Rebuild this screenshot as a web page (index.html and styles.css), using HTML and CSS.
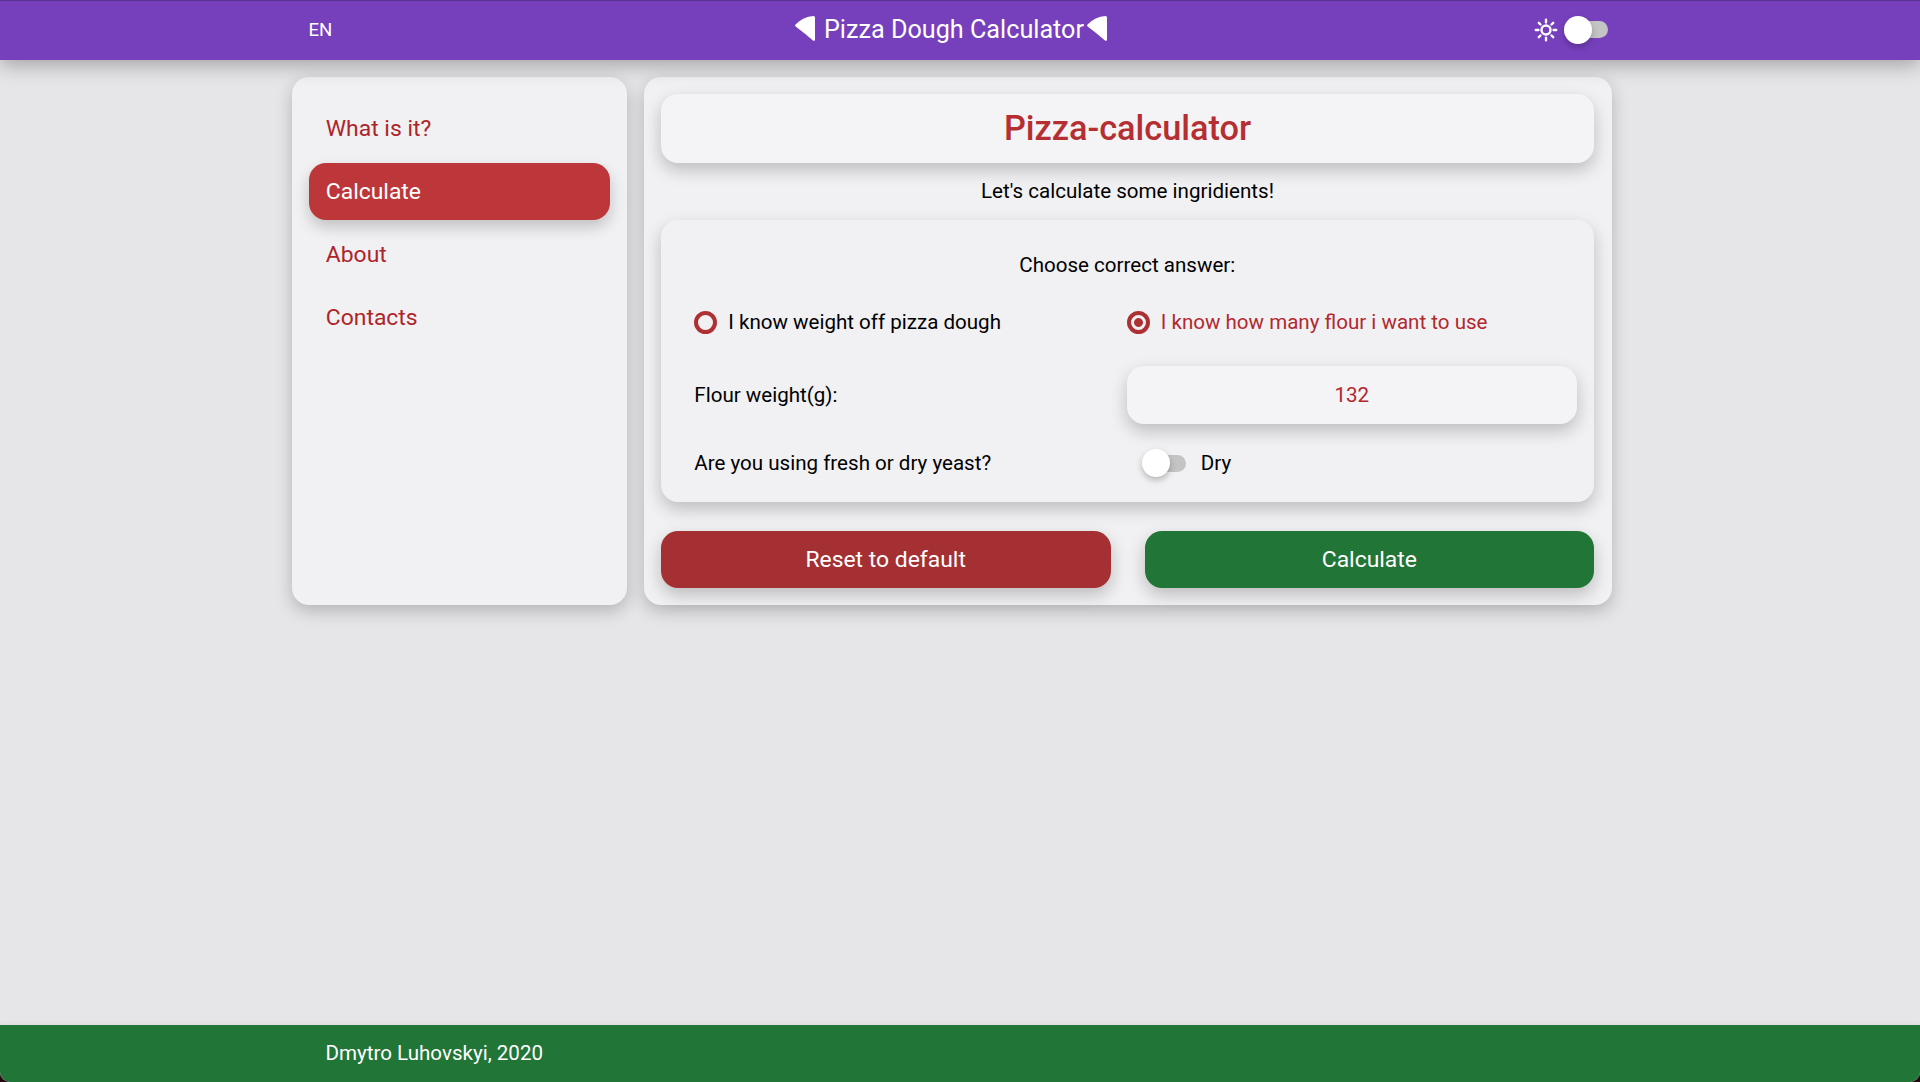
FILE: index.html
```html
<!DOCTYPE html>
<html lang="en">
<head>
<meta charset="utf-8">
<title>Pizza Dough Calculator</title>
<link rel="stylesheet" href="styles.css">
</head>
<body>
<div class="app">
  <header class="header">
    <div class="header-inner">
      <span class="lang">EN</span>
      <h2 class="brand">
        <svg class="slice slice-left" viewBox="0 0 20 25"><path d="M.5 8.500Q8 .8 18.500 0Q20 0 20 1.500V23.500Q19.700 25.600 18 24.600Q10.500 18 1 10.800Q-.4 9.700 .5 8.500Z"/></svg>
        <span>Pizza Dough Calculator</span>
        <svg class="slice slice-right" viewBox="0 0 20 25"><path d="M.5 8.500Q8 .8 18.500 0Q20 0 20 1.500V23.500Q19.700 25.600 18 24.600Q10.500 18 1 10.800Q-.4 9.700 .5 8.500Z"/></svg>
      </h2>
      <div class="theme">
        <svg class="sun" viewBox="0 0 24 24"><circle cx="12" cy="12" r="4.500"/><path d="M12 1.800v2.600M12 19.600v2.600M1.800 12h2.600M19.600 12h2.600M4.800 4.800l1.700 1.700M17.500 17.500l1.700 1.700M4.800 19.200l1.700-1.700M17.500 6.500l1.700-1.700"/></svg>
        <span class="switch"></span>
      </div>
    </div>
  </header>
  <div class="layout">
    <nav class="menu card">
      <a class="menu-item">What is it?</a>
      <a class="menu-item active">Calculate</a>
      <a class="menu-item">About</a>
      <a class="menu-item">Contacts</a>
    </nav>
    <main class="content card">
      <h1 class="title">Pizza-calculator</h1>
      <p class="intro">Let's calculate some ingridients!</p>
      <form class="form">
        <p class="question">Choose correct answer:</p>
        <div class="row row-radio">
          <label class="option"><span class="radio"></span>I know weight off pizza dough</label>
          <label class="option chosen"><span class="radio"></span>I know how many flour i want to use</label>
        </div>
        <div class="row row-input">
          <span>Flour weight(g):</span>
          <input class="field" type="text" value="132">
        </div>
        <div class="row row-yeast">
          <span>Are you using fresh or dry yeast?</span>
          <div class="yeast"><span class="switch"></span><span>Dry</span></div>
        </div>
      </form>
      <div class="actions">
        <button class="button reset">Reset to default</button>
        <button class="button submit">Calculate</button>
      </div>
    </main>
  </div>
  <footer class="footer"><div class="footer-inner">Dmytro Luhovskyi, 2020</div></footer>
</div>
</body>
</html>
```
FILE: styles.css
```css
* { box-sizing: border-box; margin: 0; }
html, body { height: 100%; }
body { background: #250611; font: 400 20.570px/24px Roboto, sans-serif; color: #000; overflow: hidden; }
.app { height: 100%; display: flex; flex-direction: column; background: #e6e5e7; border-radius: 0 0 10px 10px; overflow: hidden; }
.header { height: 60px; flex: none; background: #7640bd; color: #fff; border-top: 1px solid #5a3390; box-shadow: 0 6px 18px rgba(0,0,0,.28); position: relative; z-index: 1; }
.header-inner { width: 1320px; height: 57px; margin-left: 291px; display: grid; grid-template-columns: 1fr auto 1fr; align-items: center; }
.lang { font-size: 18.600px; padding-left: 17.500px; }
.brand { display: flex; align-items: center; font-size: 25.200px; font-weight: 400; line-height: 30px; }
.slice { width: 20px; height: 25px; fill: #fff; margin-top: -2px; }
.slice-left { margin-right: 9px; }
.slice-right { margin-left: 3px; }
.theme { display: flex; align-items: center; justify-content: flex-end; gap: 6px; padding-right: 3px; }
.sun { width: 24px; height: 24px; fill: none; stroke: #fff; stroke-width: 2.400; stroke-linecap: round; }
.switch { display: flex; align-items: center; }
.switch::before { content: ""; width: 28px; height: 28px; border-radius: 50%; background: #fff; box-shadow: 0 3px 6px rgba(0,0,0,.25); z-index: 1; }
.switch::after { content: ""; width: 27px; height: 17px; margin-left: -11px; border-radius: 8.500px; background: #c4c4c4; }
.layout { display: grid; grid-template-columns: 335px 968px; gap: 17px; margin: 17px 0 0 291.500px; height: 528px; }
.card { background: #f1f0f2; border-radius: 17px; box-shadow: 0 6px 17px rgba(0,0,0,.22); }
.menu { padding: 23px 17px; display: flex; flex-direction: column; gap: 6px; }
.menu-item { height: 57px; display: flex; align-items: center; padding: 0 17.300px; border-radius: 17px; color: #ad2529; font-size: 22.900px; }
.menu-item.active { background: #bd373a; color: #fff; box-shadow: 0 7px 15px rgba(0,0,0,.2); }
.content { padding: 17px 17.300px; display: flex; flex-direction: column; }
.title { height: 69px; flex: none; display: flex; align-items: center; justify-content: center; border-radius: 17px; background: #f4f3f5; box-shadow: 0 7px 17px rgba(0,0,0,.22); color: #b42e32; font-size: 34.300px; font-weight: 500; padding-bottom: 1px; }
.intro { height: 57px; flex: none; line-height: 57px; text-align: center; }
.form { height: 282px; flex: none; padding: 33px 17px 0 33.500px; border-radius: 17px; background: #f1f0f2; box-shadow: 0 7px 17px rgba(0,0,0,.22); }
.question { height: 24px; text-align: center; margin-right: 17px; }
.row { display: grid; grid-template-columns: 432.500px 450px; align-items: center; }
.row-radio { height: 89px; }
.option { display: flex; align-items: center; gap: 11px; }
.chosen { color: #b1282e; }
.radio { width: 23px; height: 23px; border: 4px solid #ad3034; border-radius: 50%; margin-top: 2px; }
.chosen .radio { background: radial-gradient(circle, #ad3034 4px, transparent 4.800px); }
.field { width: 450px; height: 58px; border: 0; border-radius: 17px; background: #f4f3f5; box-shadow: 0 7px 17px rgba(0,0,0,.22); font: 20.600px/24px Roboto, sans-serif; color: #b1282e; text-align: center; }
.row-yeast { height: 78px; }
.yeast { display: flex; align-items: center; gap: 15px; padding-left: 15px; }
.actions { display: grid; grid-template-columns: 1fr 1fr; gap: 34px; margin-top: 29px; }
.button { height: 57px; border: 0; border-radius: 17px; color: #fff; font: 22.900px Roboto, sans-serif; box-shadow: 0 7px 17px rgba(0,0,0,.22); }
.reset { background: #a43033; }
.submit { background: #217537; }
.footer { margin-top: auto; height: 57px; flex: none; background: #217537; color: #fff; box-shadow: 0 0 6px rgba(0,0,0,.08); }
.footer-inner { margin-left: 325.500px; line-height: 57px; }
```
